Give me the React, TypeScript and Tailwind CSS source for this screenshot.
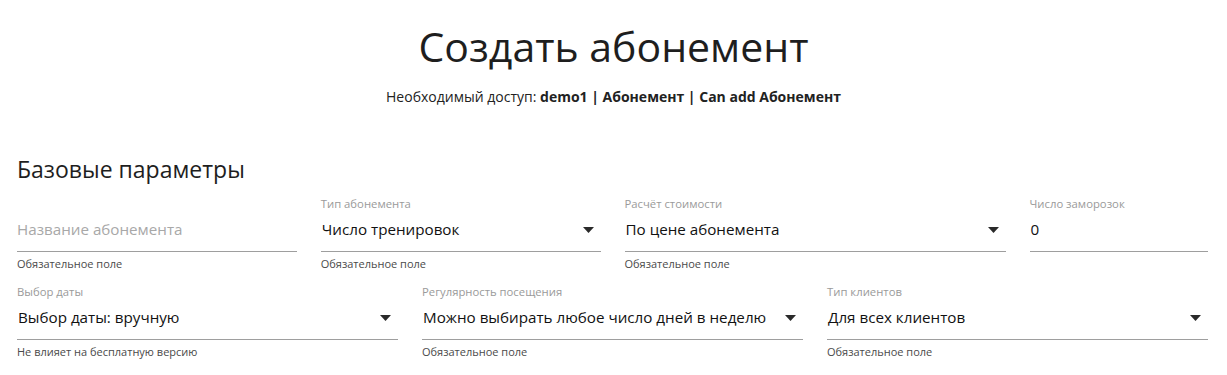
import React from 'react';

interface Field {
  label?: string;
  value?: string;
  placeholder?: string;
  helper?: string;
  select?: boolean;
  span: string;
}

const rowOne: Field[] = [
  { placeholder: 'Название абонемента', helper: 'Обязательное поле', span: 'col-span-3' },
  { label: 'Тип абонемента', value: 'Число тренировок', helper: 'Обязательное поле', select: true, span: 'col-span-3' },
  { label: 'Расчёт стоимости', value: 'По цене абонемента', helper: 'Обязательное поле', select: true, span: 'col-span-4' },
  { label: 'Число заморозок', value: '0', span: 'col-span-2' },
];

const rowTwo: Field[] = [
  { label: 'Выбор даты', value: 'Выбор даты: вручную', helper: 'Не влияет на бесплатную версию', select: true, span: 'col-span-4' },
  { label: 'Регулярность посещения', value: 'Можно выбирать любое число дней в неделю', helper: 'Обязательное поле', select: true, span: 'col-span-4' },
  { label: 'Тип клиентов', value: 'Для всех клиентов', helper: 'Обязательное поле', select: true, span: 'col-span-4' },
];

function Caret() {
  return (
    <svg width="11" height="6" viewBox="0 0 11 6" className="shrink-0 mr-[7px]">
      <path d="M0 0 L11 0 L5.5 6 Z" fill="#2a2a2a" />
    </svg>
  );
}

function FormField({ field }: { field: Field }) {
  return (
    <div className={field.span}>
      {/* Label */}
      <div className="h-[18px] text-[11.3px] leading-[18px] text-[#9a9a9a] whitespace-nowrap">
        {field.label ?? ''}
      </div>
      {/* Input line */}
      <div className="h-[39px] flex items-center justify-between border-b border-[#9e9e9e] pb-[5px]">
        {field.value ? (
          <span className="text-[15.2px] text-[#111] whitespace-nowrap pl-[1px]">{field.value}</span>
        ) : (
          <span className="text-[15.2px] text-[#a8a8a8] whitespace-nowrap">{field.placeholder}</span>
        )}
        {field.select && <Caret />}
      </div>
      {/* Helper */}
      <div className="h-[31px] pt-[4px] text-[11px] leading-[16px] text-[#4a4a4a] whitespace-nowrap">
        {field.helper ?? ''}
      </div>
    </div>
  );
}

export default function App() {
  return (
    <div className="w-[1227px] h-[375px] bg-white overflow-hidden" style={{ fontFamily: '"Open Sans", "Noto Sans", sans-serif' }}>
      {/* Header */}
      <div className="pt-[16px] text-center">
        <h1 className="text-[41px] leading-[60px] text-[#1e1e1e] font-normal">Создать абонемент</h1>
        <p className="mt-[10px] text-[14px] leading-[22px] text-[#222]">
          Необходимый доступ: <b className="font-bold">demo1 | Абонемент | Can add Абонемент</b>
        </p>
      </div>

      {/* Basic params */}
      <div className="pl-[17px] pr-[19px] mt-[46px]">
        <h2 className="text-[23px] leading-[30px] text-[#1e1e1e] font-normal">Базовые параметры</h2>
        <div className="mt-[11px] grid grid-cols-12 gap-x-6">
          {rowOne.map((f, i) => (
            <FormField key={i} field={f} />
          ))}
        </div>
        <div className="grid grid-cols-12 gap-x-6">
          {rowTwo.map((f, i) => (
            <FormField key={i} field={f} />
          ))}
        </div>
      </div>
    </div>
  );
}
